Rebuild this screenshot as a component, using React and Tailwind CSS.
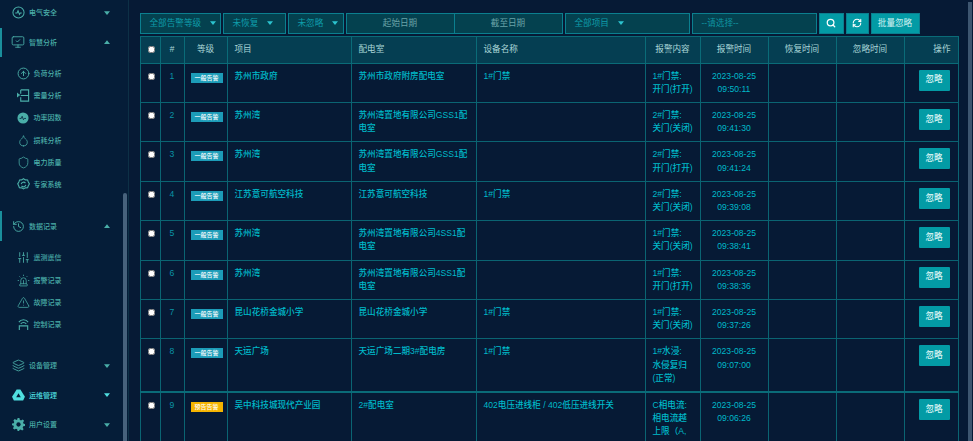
import React from "react";
import { History, CircleArrowUp, Droplet, Shield, SlidersVertical, Siren, TriangleAlert, Layers, RefreshCw, Search, MonitorCheck } from "lucide-react";

const Caret = ({ up, className = "" }) => (
  <svg viewBox="0 0 8 5" className={`w-[6px] h-[4px] ${className}`}>
    <path d={up ? "M0 5 L4 0 L8 5 Z" : "M0 0 L8 0 L4 5 Z"} fill="currentColor" />
  </svg>
);

const s = { size: 13, strokeWidth: 1.7 };
const CircleWave = () => (
  <svg viewBox="0 0 14 14" className="w-[13px] h-[13px]" fill="none" stroke="currentColor" strokeWidth="1.100">
    <circle cx="7" cy="7" r="6" /><path d="M3.500 7.500h2l1-2.500 1.500 4 1-1.500h1.500" />
  </svg>
);
const Demand = () => (
  <svg viewBox="0 0 14 14" className="w-[13px] h-[13px]" fill="none" stroke="currentColor" strokeWidth="1.200">
    <path d="M4 1h8.500v12H4V9M4 5V1M4 7h8.500" /><path d="M0.500 5l2 1.500-2 1.500z" fill="currentColor" />
  </svg>
);
const FilledWave = () => (
  <svg viewBox="0 0 14 14" className="w-[12px] h-[12px]">
    <circle cx="7" cy="7" r="6.500" fill="currentColor" /><path d="M3 7.500h2l1-2.500 1.500 4 1-1.500h2" fill="none" stroke="#051d38" strokeWidth="0.900" />
  </svg>
);
const Expert = () => (
  <svg viewBox="0 0 14 14" className="w-[13px] h-[13px]" fill="none" stroke="currentColor" strokeWidth="1.200">
    <path d="M7 .800l2 1.200 2.400.1.800 2.200 1.200 2-1.200 2-.8 2.200-2.400.1-2 1.200-2-1.200-2.400-.1-.8-2.200L.800 6.300l1.200-2 .8-2.200L5 2z" />
    <path d="M4.500 6.500a2.600 2.600 0 0 1 4.600-1M9.500 7.500a2.600 2.600 0 0 1-4.600 1" />
  </svg>
);
const Arch = () => (
  <svg viewBox="0 0 14 14" className="w-[13px] h-[13px]" fill="none" stroke="currentColor" strokeWidth="1.200">
    <path d="M2 4.500a6 6 0 0 1 10 0M4 6.500a3.600 3.600 0 0 1 6 0" /><path d="M2.500 13V8.500h9V13" />
  </svg>
);
const Drive = () => (
  <svg viewBox="0 0 14 13" className="w-[13px] h-[12px]">
    <path d="M5 0.500h4l5 8-2 4H2l-2-4z" fill="currentColor" /><path d="M7 4.500l-2.500 4.500h5z" fill="#051d38" />
  </svg>
);
const Gear = () => (
  <svg viewBox="0 0 14 14" className="w-[13px] h-[13px]">
    <path d="M6 0h2l.4 2 1.300.6L11.500 1.500 13 3l-1.100 1.800.6 1.300 1.500.4v2l-1.900.4-.6 1.300L12.500 12 11 13.500l-1.700-1-1.300.5L7.700 14H6l-.4-1.900-1.300-.6-1.700 1L1 11l1-1.700-.5-1.300L0 7.700V6l1.900-.4.500-1.300L1.500 2.600 3 1l1.700 1.100 1-.4z" fill="currentColor" />
    <circle cx="7" cy="7" r="2.300" fill="#051d38" />
  </svg>
);

const Head = ({ icon, label, up, bright, bar }) => (
  <div className={`relative flex items-center h-[29.500px] pl-[7.500px] pr-[18px] ${bright ? "text-[#4fdfe0]" : "text-[#4aaea8]"}`}>
    {bar && <span className="absolute left-0 top-0 bottom-0 w-[1.500px] bg-[#1a8f9c]" />}
    <span className="w-[21.500px] flex justify-center">{icon}</span>
    <span className="text-[7px] leading-none font-medium">{label}</span>
    <Caret up={up} className="ml-auto" />
  </div>
);
const Sub = ({ icon, label }) => (
  <div className="flex items-center h-[22.300px] pl-[12.500px] text-[#4aaea8]">
    <span className="w-[21px] flex justify-center">{icon}</span>
    <span className="text-[7px] leading-none font-medium">{label}</span>
  </div>
);

const Sidebar = () => (
  <aside className="relative w-[129px] shrink-0 h-full bg-[#051d38] border-r border-[#0d3046] overflow-hidden">
    <div className="-mt-[2px]">
      <Head icon={<CircleWave />} label="电气安全" />
      <Head icon={<MonitorCheck size={14} strokeWidth={1.5} />} label="智慧分析" up bar />
      <div className="pt-[5px] pb-[15.500px]">
        <Sub icon={<CircleArrowUp {...s} />} label="负荷分析" />
        <Sub icon={<Demand />} label="需量分析" />
        <Sub icon={<FilledWave />} label="功率因数" />
        <Sub icon={<Droplet size={13} strokeWidth={1.4} />} label="损耗分析" />
        <Sub icon={<Shield size={13} strokeWidth={1.4} />} label="电力质量" />
        <Sub icon={<Expert />} label="专家系统" />
      </div>
      <Head icon={<History {...s} />} label="数据记录" up bar />
      <div className="pt-[6px] pb-[15px]">
        <Sub icon={<SlidersVertical size={13} strokeWidth={1.6} />} label="遥测遥信" />
        <Sub icon={<Siren size={13} strokeWidth={1.4} />} label="报警记录" />
        <Sub icon={<TriangleAlert size={13} strokeWidth={1.4} />} label="故障记录" />
        <Sub icon={<Arch />} label="控制记录" />
      </div>
      <Head icon={<Layers size={13} strokeWidth={1.6} />} label="设备管理" />
      <Head icon={<Drive />} label="运维管理" bright />
      <Head icon={<Gear />} label="用户设置" />
    </div>
    <span className="absolute right-[1px] top-[193px] bottom-0 w-[4px] rounded-t-sm bg-[#47627c]" />
  </aside>
);

const field = "h-[21px] border border-[#0b7f8f] bg-[#04414f] flex items-center shrink-0";
const Select = ({ w, label }) => (
  <div className={`${field} text-[#0f9eab] ${w} pl-[9px]`}>
    <span>{label}</span>
    <Caret className="text-[#2cc3cf] ml-[9px]" />
  </div>
);

const Toolbar = () => (
  <div className="flex gap-[2px] text-[8.600px] leading-none">
    <Select w="w-[81px]" label="全部告警等级" />
    <Select w="w-[63px]" label="未恢复" />
    <Select w="w-[56px]" label="未忽略" />
    <div className={`${field} w-[217px] text-[#6ba4a9]`}>
      <span className="w-[108px] text-center border-r border-[#0b7f8f] leading-[19px]">起始日期</span>
      <span className="flex-1 text-center">截至日期</span>
    </div>
    <Select w="w-[125px]" label="全部项目" />
    <div className={`${field} w-[125px] pl-[9px] text-[#0f94a2]`}>--请选择--</div>
    <button className="w-[25px] h-[21px] bg-[#039ba5] border border-[#0b7f8f] text-white flex items-center justify-center"><Search size={10} strokeWidth={3} /></button>
    <button className="w-[23px] h-[21px] bg-[#039ba5] border border-[#0b7f8f] text-white flex items-center justify-center"><RefreshCw size={10} strokeWidth={2.600} /></button>
    <button className="w-[49px] h-[21px] bg-[#039ba5] border border-[#0b7f8f] text-[#d6f3f3]">批量忽略</button>
  </div>
);

const rows = [
  { n: 1, level: "一般告警", p: "苏州市政府", room: "苏州市政府附房配电室", dev: "1#门禁", c: ["1#门禁:", "开门(打开)"], t: "09:50:11" },
  { n: 2, level: "一般告警", p: "苏州湾", room: "苏州湾置地有限公司GSS1配电室", dev: "", c: ["2#门禁:", "关门(关闭)"], t: "09:41:30" },
  { n: 3, level: "一般告警", p: "苏州湾", room: "苏州湾置地有限公司GSS1配电室", dev: "", c: ["2#门禁:", "开门(打开)"], t: "09:41:24" },
  { n: 4, level: "一般告警", p: "江苏意可航空科技", room: "江苏意可航空科技", dev: "1#门禁", c: ["2#门禁:", "关门(关闭)"], t: "09:39:08" },
  { n: 5, level: "一般告警", p: "苏州湾", room: "苏州湾置地有限公司4SS1配电室", dev: "", c: ["1#门禁:", "关门(关闭)"], t: "09:38:41" },
  { n: 6, level: "一般告警", p: "苏州湾", room: "苏州湾置地有限公司4SS1配电室", dev: "", c: ["1#门禁:", "开门(打开)"], t: "09:38:36" },
  { n: 7, level: "一般告警", p: "昆山花桥金城小学", room: "昆山花桥金城小学", dev: "1#门禁", c: ["1#门禁:", "关门(关闭)"], t: "09:37:26" },
  { n: 8, level: "一般告警", p: "天运广场", room: "天运广场二期3#配电房", dev: "1#门禁", c: ["1#水浸:", "水侵复归", "(正常)"], t: "09:07:00" },
  { n: 9, level: "预告告警", warn: true, p: "吴中科技城现代产业园", room: "2#配电室", dev: "402电压进线柜 / 402低压进线开关", c: ["C相电流:", "相电流越", "上限（A,"], t: "09:06:26" },
];

const th = "border border-[#0a6b78] font-normal text-[#a9d6d8] h-[27px] p-0";
const cell = "border border-[#0a6472] align-top py-[6px]";
const td = `${cell} px-[7px]`;

const Table = () => (
  <table className="mt-[2px] w-[818px] table-fixed border-collapse text-[8.600px] leading-[13.200px] text-[#00b9c9] font-medium">
    <colgroup>
      <col className="w-[20px]" /><col className="w-[24px]" /><col className="w-[43px]" /><col className="w-[124px]" />
      <col className="w-[125px]" /><col className="w-[169px]" /><col className="w-[55px]" /><col className="w-[68px]" />
      <col className="w-[68px]" /><col className="w-[68px]" /><col className="w-[54px]" />
    </colgroup>
    <thead className="bg-[#053e52]">
      <tr>
        <th className={th}><input type="checkbox" className="block ml-[7px] w-[7px] h-[7px]" /></th>
        <th className={`${th} italic`}>#</th>
        <th className={th}>等级</th>
        <th className={`${th} text-left pl-[7px]`}>项目</th>
        <th className={`${th} text-left pl-[7px]`}>配电室</th>
        <th className={`${th} text-left pl-[7px]`}>设备名称</th>
        <th className={th}>报警内容</th>
        <th className={th}>报警时间</th>
        <th className={th}>恢复时间</th>
        <th className={th}>忽略时间</th>
        <th className={`${th} text-right pr-[7px]`}>操作</th>
      </tr>
    </thead>
    <tbody>
      {rows.map((r) => (
        <tr key={r.n} className={r.warn ? "border-t-2 border-[#0a6b78]" : ""}>
          <td className={cell}><input type="checkbox" className="block ml-[7px] mt-[3px] w-[7px] h-[7px]" /></td>
          <td className={`${cell} text-center text-[#0a94a6]`}>{r.n}</td>
          <td className={cell}>
            <span className={`block ml-[6px] mt-[3px] w-[32px] h-[10px] text-center text-[6px] leading-[10px] text-white ${r.warn ? "bg-[#f5b400]" : "bg-[#1c9cb8]"}`}>{r.level}</span>
          </td>
          <td className={td}>{r.p}</td>
          <td className={td}>{r.room}</td>
          <td className={td}>{r.dev}</td>
          <td className={`${td} whitespace-nowrap`}>{r.c.map((l, i) => <div key={i}>{l}</div>)}</td>
          <td className={`${cell} text-center`}><div>2023-08-25</div><div>{r.t}</div></td>
          <td className={td}></td>
          <td className={td}></td>
          <td className={`${cell} pl-[14px]`}>
            <button className="block w-[31px] h-[21px] bg-[#039ba5] text-[#d6f3f3] text-[8.600px] rounded-[1px]">忽略</button>
          </td>
        </tr>
      ))}
    </tbody>
  </table>
);

export default function App() {
  return (
    <div className="relative w-[973px] h-[441px] overflow-hidden flex bg-[#061a35] font-['Liberation_Sans','Noto_Sans_CJK_SC',sans-serif]">
      <Sidebar />
      <main className="flex-1 pl-[10.500px] pt-[12.500px] min-w-0">
        <Toolbar />
        <Table />
      </main>
      <span className="absolute right-[1px] top-[2px] bottom-0 w-[4px] bg-[#3d5670]" />
    </div>
  );
}
